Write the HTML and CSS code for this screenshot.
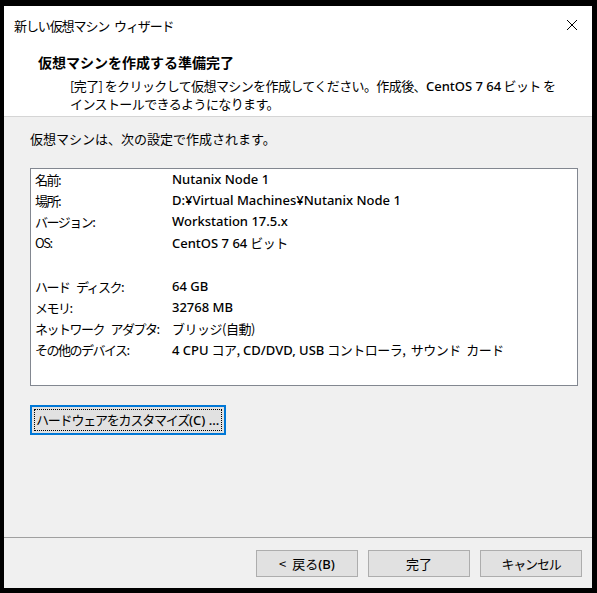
FILE: index.html
```html
<!DOCTYPE html>
<html lang="ja">
<head>
    <meta charset="UTF-8">
    <title>新しい仮想マシン ウィザード</title>
    <link rel="stylesheet" href="styles.css">
</head>
<body>

    <div class="window">
        <!-- Header -->
        <div class="header">
            <div class="titlebar">
                <span class="title">新しい仮想マシン ウィザード</span>
                <span class="close">
                    <svg width="12" height="12" viewBox="0 0 12 12">
                        <path d="M1 1 L11 11 M11 1 L1 11" stroke="#000" stroke-width="1" fill="none"/>
                    </svg>
                </span>
            </div>
            <h1 class="heading">仮想マシンを作成する準備完了</h1>
            <p class="subtitle">[完了] をクリックして仮想マシンを作成してください。作成後、<span class="en">CentOS 7 64</span> ビット を<br>インストールできるようになります。</p>
        </div>

        <!-- Body -->
        <div class="content">
            <p class="intro">仮想マシンは、次の設定で作成されます。</p>

            <div class="summary">
                <div class="row"><span class="label">名前:</span><span class="value en">Nutanix Node 1</span></div>
                <div class="row"><span class="label">場所:</span><span class="value en">D:¥Virtual Machines¥Nutanix Node 1</span></div>
                <div class="row"><span class="label">バージョン:</span><span class="value en">Workstation 17.5.x</span></div>
                <div class="row"><span class="label">OS:</span><span class="value"><span class="en">CentOS 7 64</span> <span class="jp">ビット</span></span></div>
                <div class="row spacer"></div>
                <div class="row"><span class="label">ハード ディスク:</span><span class="value en">64 GB</span></div>
                <div class="row"><span class="label">メモリ:</span><span class="value en">32768 MB</span></div>
                <div class="row"><span class="label">ネットワーク アダプタ:</span><span class="value jp">ブリッジ(自動)</span></div>
                <div class="row"><span class="label">その他のデバイス:</span><span class="value"><span class="en">4 CPU</span> <span class="jp">コア</span>, <span class="en">CD/DVD, USB</span> <span class="jp">コントローラ, サウンド カード</span></span></div>
            </div>

            <button class="customize"><span class="focus"><span class="kana">ハードウェアをカスタマイズ</span><span class="en">(C) ...</span></span></button>
        </div>

        <!-- Footer -->
        <div class="footer">
            <button>&lt; 戻る<span class="en">(B)</span></button>
            <button>完了</button>
            <button class="kana">キャンセル</button>
        </div>
    </div>

</body>
</html>
```

FILE: styles.css
```css
* {
    margin: 0;
    padding: 0;
    box-sizing: border-box;
}

body {
    background: #000;
    font-family: "Noto Sans CJK JP", sans-serif;
    font-size: 13px;
    color: #000;
    height: 593px;
    overflow: hidden;
}

.window {
    margin: 6px 5px 5px 4px;
    height: 582px;
    background: #f0f0f0;
    display: flex;
    flex-direction: column;
}

.en {
    font-family: "Noto Sans", sans-serif;
    font-weight: 500;
    letter-spacing: 0;
    word-spacing: 0;
}

.kana {
    letter-spacing: -1.2px;
}

.jp {
    letter-spacing: -0.5px;
    word-spacing: 3px;
}

/* Header */
.header {
    background: #fff;
    height: 111px;
    border-bottom: 1px solid #d5d5d5;
}

.titlebar {
    height: 38px;
    display: flex;
    justify-content: space-between;
    align-items: center;
    padding: 0 14px 0 10px;
}

.title {
    font-size: 13px;
    letter-spacing: -1.1px;
    word-spacing: 3px;
}

.close {
    display: flex;
}

.heading {
    font-size: 14px;
    font-weight: bold;
    margin: 8px 0 0 34px;
    line-height: 20px;
}

.subtitle {
    margin: 5px 0 0 66px;
    line-height: 18px;
    letter-spacing: -0.6px;
}

/* Body */
.content {
    flex: 1;
    padding: 12px 14px 0 26px;
    border-bottom: 1px solid #a0a0a0;
}

.intro {
    line-height: 20px;
}

.summary {
    margin-top: 19px;
    height: 218px;
    background: #fff;
    border: 1px solid #828790;
    padding: 0 4px;
}

.row {
    display: flex;
    height: 21px;
    line-height: 21px;
    white-space: nowrap;
}

.spacer {
    height: 23px;
}

.label {
    width: 137px;
    letter-spacing: -1.5px;
    word-spacing: 5px;
}

.customize {
    margin-top: 19px;
    width: 196px;
    height: 30px;
    background: #e1e1e1;
    border: 2px solid #0078d7;
    font-family: inherit;
    font-size: 13px;
    text-align: left;
    padding: 2px;
    display: flex;
    white-space: nowrap;
}

.customize .focus {
    flex: 1;
    border: 1px dotted #000;
    padding-left: 1px;
    line-height: 20px;
}

/* Footer */
.footer {
    height: 50px;
    display: flex;
    justify-content: flex-end;
    align-items: center;
    gap: 10px;
    padding: 1px 10px 0 0;
}

.footer button {
    width: 102px;
    height: 27px;
    background: #e1e1e1;
    border: 1px solid #adadad;
    font-family: inherit;
    font-size: 13px;
    word-spacing: 3px;
}
```
